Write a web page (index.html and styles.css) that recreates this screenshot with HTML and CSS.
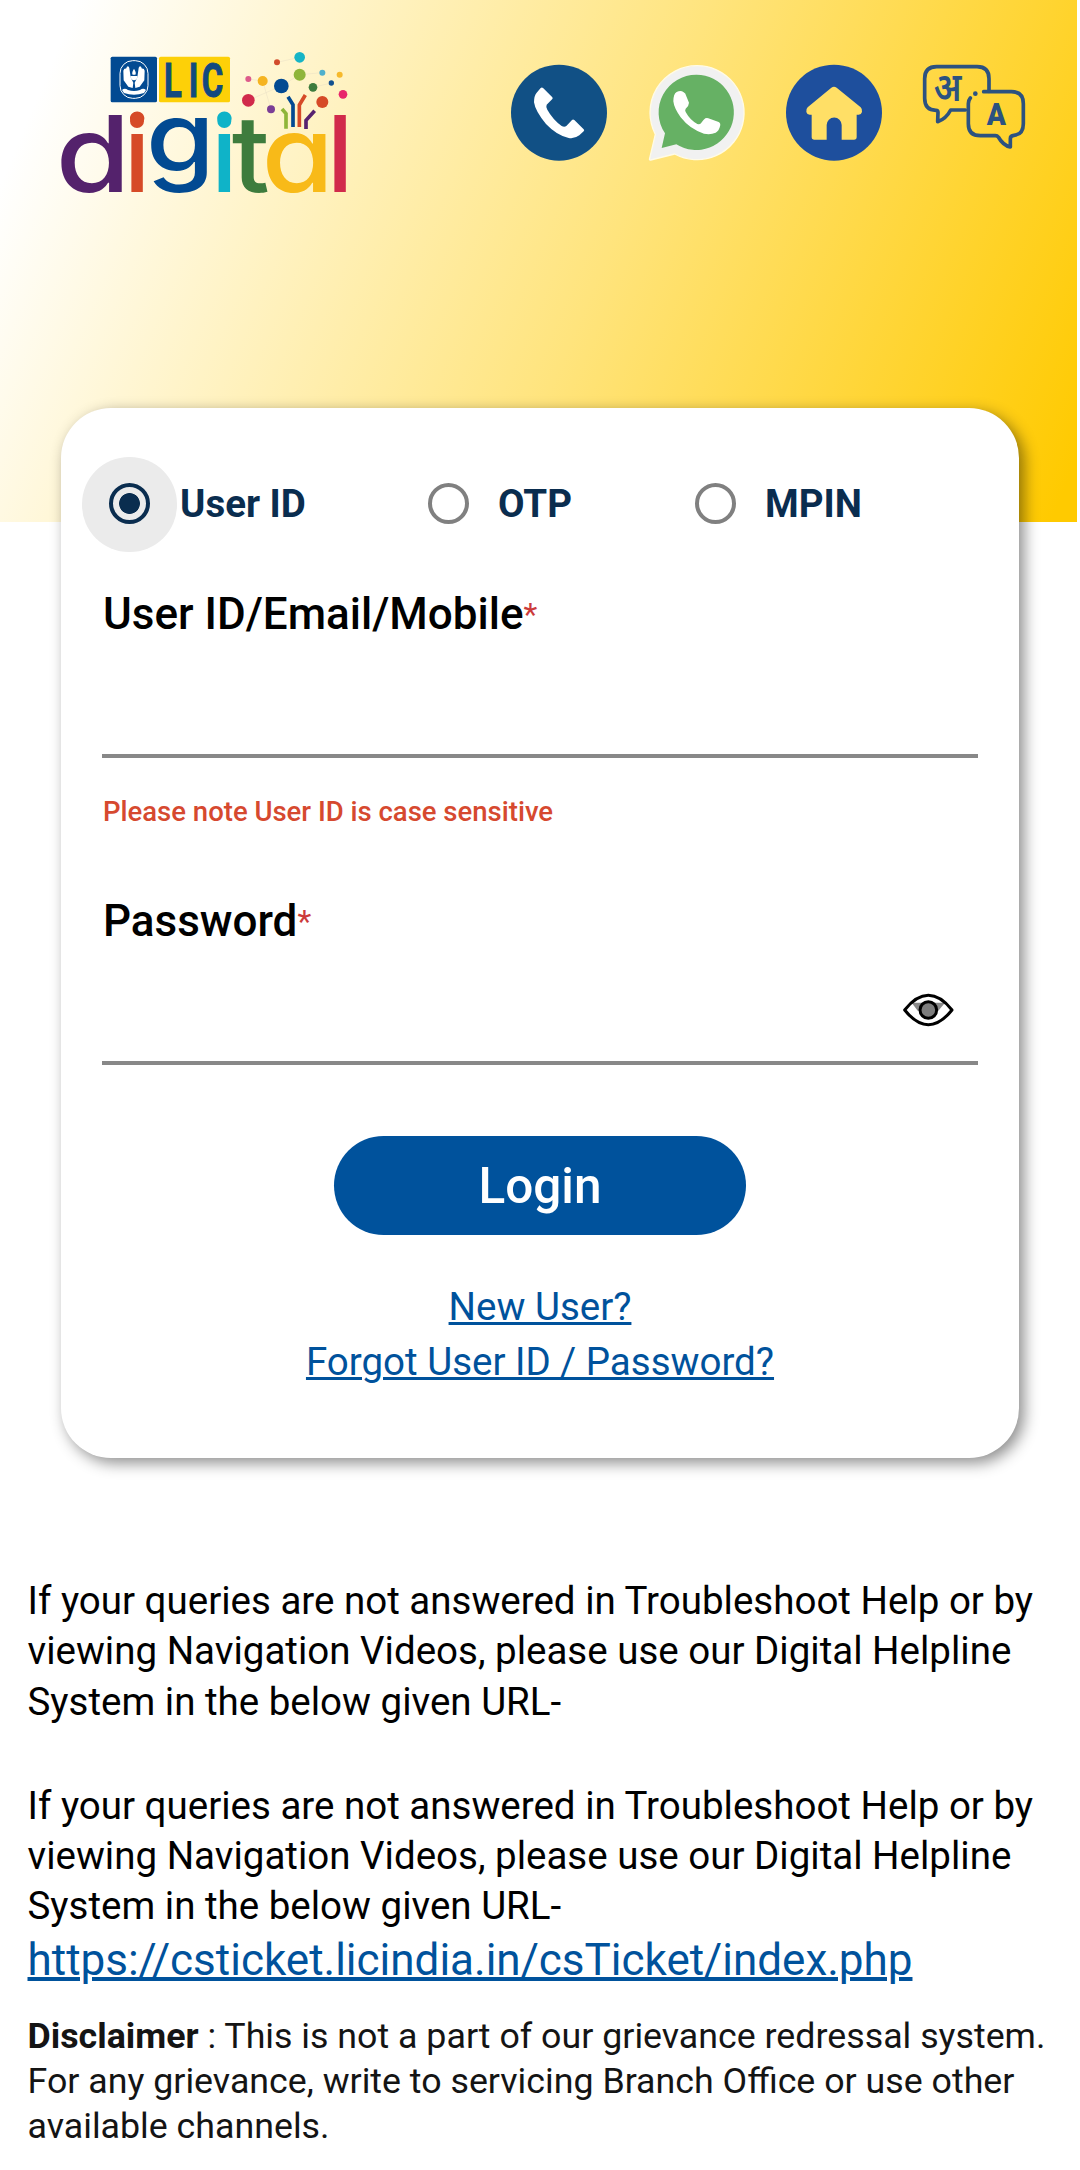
FILE: index.html
```html
<!DOCTYPE html>
<html lang="en">
<head>
<meta charset="utf-8">
<title>LIC Digital - Login</title>
<link rel="stylesheet" href="styles.css">
</head>
<body>
<header class="banner">
  <svg class="logo" viewBox="0 0 990 570" role="img" aria-label="LIC digital">
    <rect x="212" y="50" width="139" height="137" rx="5" fill="#024a92"/>
    <rect x="357" y="50" width="213" height="137" rx="5" fill="#fdd008"/>
    <rect x="240" y="62" width="84" height="113" rx="38" fill="none" stroke="#fff" stroke-width="3"/>
    <g fill="#fff">
      <path d="M250 92q3-9 8-6l3-6q5-3 7 4l4 28 8 16-2 16-13-4-14-19z"/>
      <path d="M314 92q-3-9-8-6l-3-6q-5-3-7 4l-4 28-8 16 2 16 13-4 14-19z"/>
      <path d="M282 86q8 12 4 18h-8q-4-6 4-18zM271 108h22q-2 13-11 13t-11-13z"/>
      <path d="M246 150q8-8 18 0 18 6 36 0 10-8 18 0l-6 9q-30 10-60 0z"/>
    </g>
    <text class="lic" transform="translate(372 170) scale(.68 1)" x="0 109 167">LIC</text>
    <g class="web">
      <path d="M625 117L668 123 693 208M724 138L779 104 847 98M819 142L874 129M779 52L711 67M625 181L724 138"/>
    </g>
    <circle cx="779" cy="52" r="16" fill="#16b4c6"/>
    <circle cx="711" cy="67" r="9" fill="#d24c2d"/>
    <circle cx="779" cy="104" r="18" fill="#8fb53a"/>
    <circle cx="847" cy="98" r="9" fill="#4fb0cc"/>
    <circle cx="899" cy="104" r="9" fill="#f6b92c"/>
    <circle cx="874" cy="129" r="8" fill="#12508f"/>
    <circle cx="625" cy="117" r="9" fill="#dd5b8b"/>
    <circle cx="668" cy="123" r="15" fill="#f5b421"/>
    <circle cx="724" cy="138" r="22" fill="#024a92"/>
    <circle cx="819" cy="142" r="13" fill="#3e7c3d"/>
    <circle cx="909" cy="163" r="13" fill="#e8266b"/>
    <circle cx="625" cy="181" r="19" fill="#d12a4b"/>
    <circle cx="847" cy="186" r="18" fill="#d64a27"/>
    <circle cx="693" cy="208" r="12" fill="#7b3e96"/>
    <g fill="none" stroke-width="11">
      <path d="M726 207l12 14v45" stroke="#8fb53a"/>
      <path d="M744 170l15 24v67" stroke="#024a92"/>
      <path d="M796 165l-18 30v66" stroke="#d64a27"/>
      <path d="M824 212l-26 29v26" stroke="#57226f"/>
    </g>
    <g class="wordmark">
      <text transform="translate(47 455) scale(1.14 1)" fill="#54226c">d</text>
      <text transform="translate(251 455)" fill="#d64a27">i</text>
      <text class="low" transform="translate(318 397) scale(1.13 1)" fill="#024a92">g</text>
      <text transform="translate(513 455)" fill="#0fb3c8">i</text>
      <text transform="translate(575 455) scale(1.05 1)" fill="#3e7c3d">t</text>
      <text transform="translate(665 455) scale(1.1 1)" fill="#f8ba18">a</text>
      <text transform="translate(860 455)" fill="#d12a4b">l</text>
    </g>
    <circle cx="291" cy="243" r="21" fill="#d64a27"/>
    <circle cx="553" cy="243" r="21" fill="#0fb3c8"/>
  </svg>
  <nav class="tools">
    <svg class="tool" viewBox="60 70 294 294" aria-label="Call">
      <circle cx="207" cy="216" r="144" fill="#115085"/>
      <path fill="#fff" d="M152 142q4-3 8 1l27 27q2 3 0 5l-17 17q-3 6 2 15 16 29 43 49 8 4 14 0l17-18q3-3 7 0l28 28q3 3 0 6l-13 12q-14 11-32 8-36-8-68-42-32-38-36-65 0-20 8-29z"/>
    </svg>
    <svg class="tool" viewBox="471 70 294 294" aria-label="WhatsApp">
      <path fill="#f1f1f1" stroke="#fffbe6" stroke-width="4" stroke-linejoin="round" d="M620 75a141 141 0 1 1-66 265l-72 18q-5 1-3-5l17-72a141 141 0 0 1 124-206z"/>
      <path fill="#66b164" d="M620 102a113 113 0 1 1-61 209l-44 11 10-44a113 113 0 0 1 95-176z"/>
      <path fill="#fff" d="M560 154q12-6 20 0 7 3 9 13l8 19q0 9-10 18-3 5 0 10 13 24 35 36 8 2 12-4 7-9 12-13 6-2 13 1l27 10q7 4 4 13-3 14-13 19-15 7-35 3-42-13-70-49-20-28-22-48 0-22 10-28z"/>
    </svg>
    <svg class="tool" viewBox="42 70 294 294" aria-label="Home">
      <circle cx="192" cy="216" r="144" fill="#1e4f9d"/>
      <path fill="#ffdf66" d="M184 141q8-5 16 0l72 59q6 6 4 14-2 8-10 8h-6v67q0 8-8 8h-37v-44a22 22 0 0 0-45 0v44h-37q-8 0-8-8v-67h-6q-8 0-10-8-2-8 4-14z"/>
    </svg>
    <svg class="tool lang" viewBox="453 70 315 252" aria-label="Language">
      <g fill="none" stroke="#2c5280" stroke-width="11" stroke-linecap="round" stroke-linejoin="round">
        <path d="M657 152v-38q0-36-36-36H500q-36 0-36 36v59q0 36 34 36 6 0 6 6l-1 28q25-8 39-35h44"/>
        <path d="M641 153h83q36 0 36 36v60q0 32-28 35-11 1-11 10v25q-22-5-36-30-3-4-9-4h-45q-36 0-36-36v-60q0-10 6-17"/>
      </g>
      <circle cx="616" cy="159" r="7" fill="#2c5280"/>
      <text class="hindi" transform="translate(491 180) scale(.86 1)">अ</text>
      <text class="latin" transform="translate(679 252) scale(.9 1)">A</text>
    </svg>
  </nav>
</header>

<main class="card">
  <div class="modes">
    <label class="mode active"><span class="ring"></span>User ID</label>
    <label class="mode otp"><span class="ring"></span>OTP</label>
    <label class="mode mpin"><span class="ring"></span>MPIN</label>
  </div>
  <div class="field">
    <label class="caption">User ID/Email/Mobile<span class="req">*</span></label>
    <div class="entry"></div>
  </div>
  <p class="note">Please note User ID is case sensitive</p>
  <div class="field">
    <label class="caption">Password<span class="req">*</span></label>
    <div class="entry">
      <svg class="eye" viewBox="938 100 153 102" aria-label="Show password">
        <path fill="#8a8a8a" d="M964 129h100l-20 24h-62z"/>
        <path fill="none" stroke="#000" stroke-width="9" stroke-linejoin="round" d="M943 151q35-44 71-44t71 44q-35 44-71 44t-71-44z"/>
        <circle cx="1014" cy="151" r="25" fill="#7d7d7d" stroke="#000" stroke-width="9"/>
      </svg>
    </div>
  </div>
  <button class="login" type="button">Login</button>
  <div class="links">
    <a href="#new">New User?</a>
    <a href="#forgot">Forgot User ID / Password?</a>
  </div>
</main>

<section class="help">
  <p class="query">If your queries are not answered in Troubleshoot Help or by<br>viewing Navigation Videos, please use our Digital Helpline<br>System in the below given URL-</p>
  <p class="query second">If your queries are not answered in Troubleshoot Help or by<br>viewing Navigation Videos, please use our Digital Helpline<br>System in the below given URL-</p>
  <a class="url" href="#helpline">https://csticket.licindia.in/csTicket/index.php</a>
  <p class="disclaimer"><b>Disclaimer</b> : This is not a part of our grievance redressal system.<br>For any grievance, write to servicing Branch Office or use other<br>available channels.</p>
</section>
</body>
</html>
```
FILE: styles.css
```css
* { box-sizing: border-box; }
body {
  margin: 0;
  background: #fff;
  color: #000;
  font-family: Roboto, "Liberation Sans", sans-serif;
  height: 2170px;
  overflow: hidden;
}
p { margin: 0; }
svg { display: block; flex: none; overflow: visible; }

.banner {
  display: flex;
  align-items: flex-start;
  width: 1077px;
  height: 522px;
  padding: 40px 0 0 40px;
  background: linear-gradient(113deg, #fff 6%, #ffe47d 55%, #ffca00 98%);
}
.logo { width: 330px; height: 190px; }
.lic {
  font: bold 145px Roboto, sans-serif;
  fill: #12497f;
  stroke: #12497f;
  stroke-width: 3px;
}
.wordmark {
  font: 500 318px Inter, sans-serif;
  font-feature-settings: "cv11";
}
.wordmark .low { font-size: 295px; }
.web path { fill: none; stroke: #e9dfc4; stroke-width: 1.5; }
.tools {
  display: flex;
  gap: 39px;
  margin: 23.5px 0 0 140px;
}
.tool { width: 98px; height: 98px; }
.lang { width: 105px; height: 84px; }
.hindi { font: 600 118px "Noto Sans Devanagari", "Noto Sans", sans-serif; fill: #2c5280; }
.latin { font: 900 94px Roboto, sans-serif; text-anchor: middle; fill: #2c5280; }

.card {
  display: flex;
  flex-direction: column;
  position: relative;
  width: 958px;
  height: 1050px;
  margin: -114px 0 0 61px;
  padding: 45px 41px 0;
  border-radius: 50px;
  background: #fff;
  box-shadow: 5px 5px 15px rgba(0, 0, 0, .45);
}
.modes { display: flex; height: 100px; }
.mode {
  display: flex;
  align-items: center;
  width: 319px;
  padding-left: 7px;
  color: #0a2d4f;
  font-size: 38.5px;
  font-weight: 700;
}
.mode.otp { width: 267px; }
.mode.mpin { width: auto; }
.ring {
  width: 41px;
  height: 41px;
  margin-right: 29px;
  border: 4.5px solid #808080;
  border-radius: 50%;
}
.active .ring {
  margin-right: 30px;
  border-color: #0a2d4f;
  background: #ebebeb radial-gradient(circle, #0a2d4f 10px, transparent 10.8px);
  box-shadow: 0 1px 0 27px #ebebeb;
}
.field { margin-top: 35px; }
.caption {
  display: block;
  padding-left: 1px;
  font-size: 44px;
  font-weight: 500;
  line-height: 52px;
}
.req {
  color: #cc3b3b;
  font-size: 32px;
  font-weight: 400;
  line-height: 0;
  vertical-align: 4px;
}
.entry {
  display: flex;
  justify-content: flex-end;
  height: 118px;
  width: 876px;
  padding: 46px 24px 0;
  border-bottom: 4px solid #888;
}
.eye { width: 51px; height: 34px; }
.note {
  margin-top: 37px;
  padding-left: 1px;
  color: #d6492f;
  font-size: 27.5px;
  font-weight: 500;
  line-height: 34px;
}
.note + .field { margin-top: 66px; }
.login {
  align-self: center;
  width: 412px;
  height: 99px;
  margin-top: 71px;
  border: 0;
  border-radius: 50px;
  background: #00529c;
  color: #fff;
  font: 500 49.5px Roboto, sans-serif;
}
.links {
  display: flex;
  flex-direction: column;
  align-items: center;
  margin-top: 43.5px;
  font-size: 38.5px;
  line-height: 55px;
}
a {
  color: #00529c;
  text-decoration: underline;
  text-decoration-thickness: 3px;
}

.help { padding: 118px 0 0 27.5px; white-space: nowrap; }
.query { font-size: 38.5px; line-height: 50.3px; }
.second { margin-top: 54px; }
.url {
  display: block;
  margin-top: 2px;
  font-size: 44px;
  line-height: 52px;
  text-decoration-thickness: 4px;
}
.disclaimer {
  margin-top: 28px;
  color: #141414;
  font-size: 35.75px;
  line-height: 45px;
}
```
